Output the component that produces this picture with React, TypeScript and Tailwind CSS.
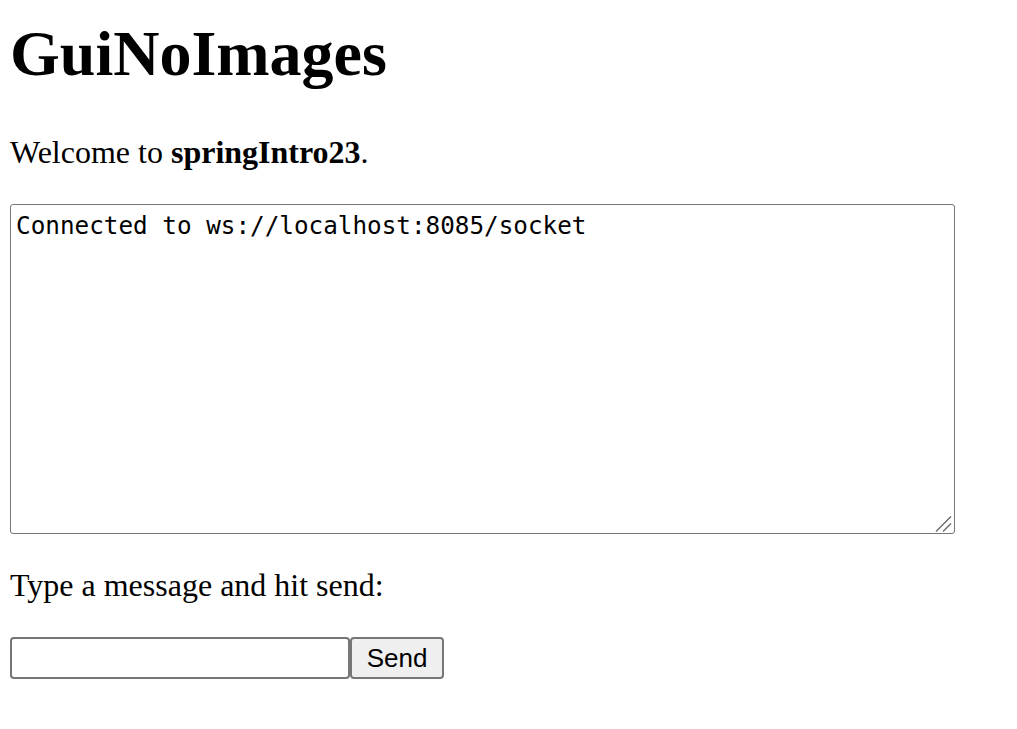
import { useState } from 'react'

export default function App() {
  const [log] = useState('Connected to ws://localhost:8085/socket')
  const [msg, setMsg] = useState('')

  return (
    <div className="min-h-screen bg-white pl-[10px] pt-[17px] text-black font-['Liberation_Serif',serif]">
      <h1 className="text-[64px] leading-[74px] font-bold">GuiNoImages</h1>

      <p className="mt-[43px] text-[32px] leading-[37px]">
        Welcome to <b>springIntro23</b>.
      </p>

      <div className="relative mt-[33px] w-[945px] h-[330px]">
        <textarea
          readOnly
          value={log}
          className="block w-full h-full resize-none rounded-[3px] border border-[#767676] px-[5px] pt-[7px] pb-[5px] text-[24.3px] leading-[28px] font-['DejaVu_Sans_Mono',monospace] outline-none"
        />
        {/* resize grip */}
        <svg className="absolute right-[2px] bottom-[1px] w-[18px] h-[18px] pointer-events-none" viewBox="0 0 18 18">
          <line x1="1" y1="16.5" x2="16" y2="1.5" stroke="#6b6b6b" strokeWidth="1.5" />
          <line x1="8" y1="16.5" x2="16" y2="8.5" stroke="#6b6b6b" strokeWidth="1.5" />
        </svg>
      </div>

      <p className="mt-[33px] text-[32px] leading-[37px]">Type a message and hit send:</p>

      <div className="mt-[33px] flex">
        <input
          value={msg}
          onChange={e => setMsg(e.target.value)}
          className="w-[340px] h-[42px] rounded-[4px] border-2 border-[#767676] px-[4px] text-[26px] outline-none"
        />
        <button className="h-[42px] w-[94px] rounded-[4px] border-2 border-[#767676] bg-[#efefef] text-[26px] leading-none font-['Liberation_Sans',Arial,sans-serif]">
          Send
        </button>
      </div>
    </div>
  )
}
